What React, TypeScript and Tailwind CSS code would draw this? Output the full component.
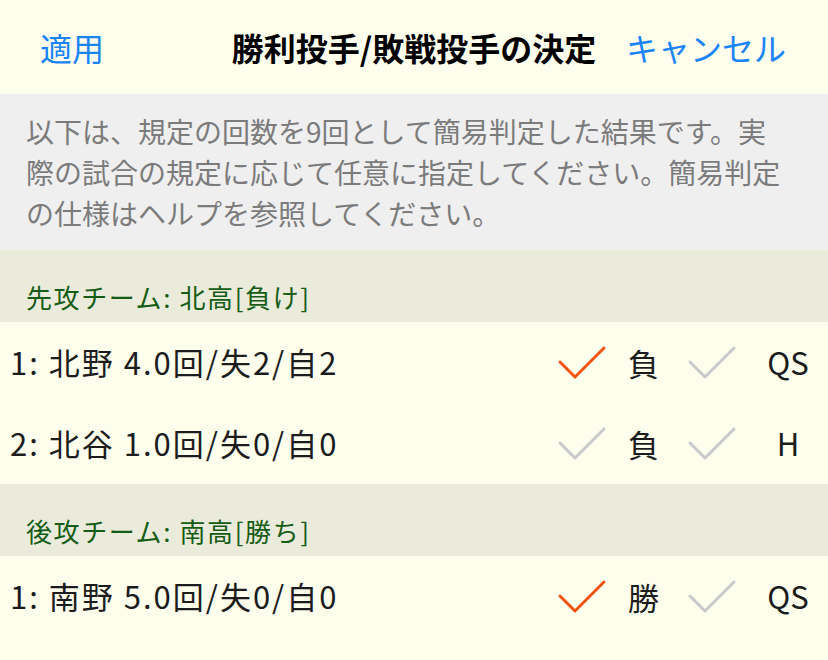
import React from 'react';

type Pitcher = {
  label: string;
  decision: string;
  decisionOn: boolean;
  extra: string;
  extraOn: boolean;
};

const TEAMS: { header: string; pitchers: Pitcher[] }[] = [
  {
    header: '先攻チーム: 北高[負け]',
    pitchers: [
      { label: '1: 北野 4.0回/失2/自2', decision: '負', decisionOn: true, extra: 'QS', extraOn: false },
      { label: '2: 北谷 1.0回/失0/自0', decision: '負', decisionOn: false, extra: 'H', extraOn: false },
    ],
  },
  {
    header: '後攻チーム: 南高[勝ち]',
    pitchers: [
      { label: '1: 南野 5.0回/失0/自0', decision: '勝', decisionOn: true, extra: 'QS', extraOn: false },
    ],
  },
];

function Check({ on }: { on: boolean }) {
  return (
    <svg width="52" height="36" viewBox="0 0 52 36" className="shrink-0">
      <polyline
        points="4,17 19,32 48,3"
        fill="none"
        stroke={on ? '#f4530f' : '#c9c9cc'}
        strokeWidth="3"
        strokeLinecap="round"
        strokeLinejoin="round"
      />
    </svg>
  );
}

export default function App() {
  return (
    <div
      className="min-h-[660px] w-[828px] bg-[#fdfeec] text-[#1c1c1c]"
      style={{ fontFamily: '"Noto Sans CJK JP", "Noto Sans", sans-serif' }}
    >
      {/* Nav bar */}
      <div className="h-[94px] flex items-center justify-between pl-[40px] pr-[42px] relative">
        <span className="text-[32px] text-[#1a84f7]">適用</span>
        <span className="absolute left-0 right-0 text-center text-[32px] font-bold text-black pointer-events-none">
          勝利投手/敗戦投手の決定
        </span>
        <span className="text-[32px] text-[#1a84f7]">キャンセル</span>
      </div>

      {/* Info box */}
      <div className="bg-[#efeff0] pl-[26px] pr-[20px] pt-[17px] pb-[16px] text-[28px] leading-[41px] text-[#7b7b7b]">
        <div>以下は、規定の回数を9回として簡易判定した結果です。実</div>
        <div>際の試合の規定に応じて任意に指定してください。簡易判定</div>
        <div>の仕様はヘルプを参照してください。</div>
      </div>

      {TEAMS.map((team) => (
        <div key={team.header}>
          <div className="bg-[#ebebdc] pl-[26px] pt-[29px] pb-[7px] text-[26px] leading-[36px] tracking-[1.6px] text-[#155c14]">
            {team.header}
          </div>
          {team.pitchers.map((p, i) => (
            <div key={i} className="h-[81px] flex items-center">
              <span className="flex-1 pl-[10px] text-[31px] tracking-[2px]">{p.label}</span>
              <Check on={p.decisionOn} />
              <span className="ml-[20px] w-[32px] text-[31px] leading-none">{p.decision}</span>
              <span className="ml-[26px]">
                <Check on={p.extraOn} />
              </span>
              <span className="ml-[20px] w-[60px] mr-[10px] text-center text-[31px]">{p.extra}</span>
            </div>
          ))}
        </div>
      ))}
    </div>
  );
}
